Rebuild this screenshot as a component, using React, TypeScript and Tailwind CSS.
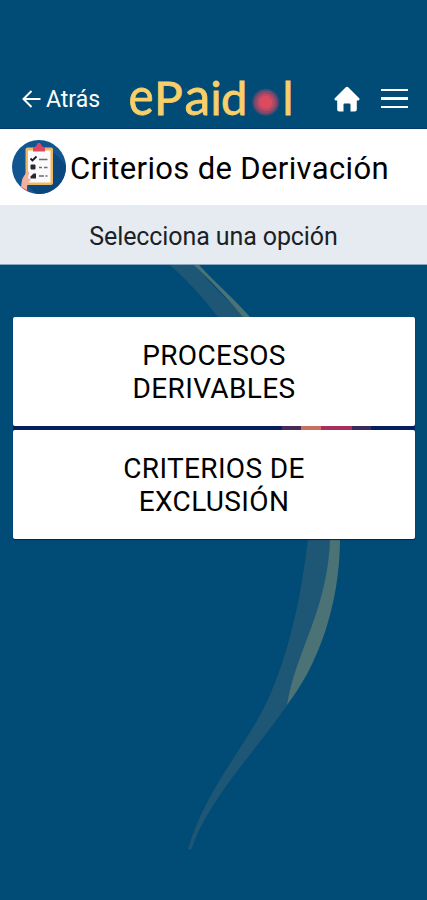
import React from "react";

const options = [
  ["PROCESOS", "DERIVABLES"],
  ["CRITERIOS DE", "EXCLUSIÓN"],
];

function Backdrop() {
  return (
    <svg
      className="pointer-events-none absolute inset-0"
      width="427"
      height="900"
      viewBox="0 0 427 900"
      fill="none"
    >
      <path
        d="M128 205C142 235 157 254 171 266C190 283 205 300 218 317L246 317C226 300 210 283 195 265C178 245 162 225 150 205Z"
        fill="#1d5775"
      />
      <path
        d="M194 265L199 265C215 282 235 300 250 317L243 317C229 300 211 281 194 265Z"
        fill="#4b7275"
      />
      <path
        d="M308 538C301 600 288 655 269 697C248 745 206 787 188 849L191 850C207 801 254 753 288 704C309 650 329 594 330 538Z"
        fill="#1d5775"
      />
      <path
        d="M330 538H340C340 608 316 668 287 705C296 650 328 610 330 538Z"
        fill="#4b7275"
      />
    </svg>
  );
}

function Logo() {
  return (
    <svg className="-mb-1 overflow-visible" width="170" height="64" viewBox="0 0 170 64">
      <g
        fill="#f8cf69"
        stroke="#f8cf69"
        strokeWidth="0.8"
        className="font-['Lato',sans-serif]"
      >
        <text transform="translate(-0.5 51) scale(.9 1)" fontSize="53">e</text>
        <text transform="translate(25 51) scale(1.02 1)" fontSize="47">P</text>
        <text transform="translate(55.5 51)" fontSize="52">a</text>
        <text transform="translate(81.500 51)" fontSize="46">i</text>
        <text transform="translate(92 51) scale(1 1)" fontSize="47">d</text>
        <text transform="translate(153.500 51)" fontSize="46">l</text>
      </g>
      <circle cx="136.700" cy="38.300" r="13.500" fill="#5c4a70" opacity=".75" />
      <circle cx="136.700" cy="38.300" r="11.500" fill="#87496a" />
      <circle cx="136.700" cy="38.300" r="9" fill="#b64963" />
      <circle cx="136.700" cy="38.300" r="6.500" fill="#dc4a5f" />
    </svg>
  );
}

function HomeIcon() {
  return (
    <svg width="26" height="26" viewBox="0 0 26 26" fill="#fff">
      <path d="M13 .8c.6 0 1 .2 1.500.7L25 12.100c1 1 .6 2.400-.9 2.400h-1.300v9c0 1.200-.8 2-2 2h-4.300v-6.700c0-.8-.5-1.300-1.300-1.300h-4.400c-.8 0-1.300.5-1.300 1.300v6.700H5.200c-1.200 0-2-.8-2-2v-9H1.900c-1.500 0-1.900-1.400-.9-2.400L11.500 1.500c.5-.5.9-.7 1.500-.7z" />
    </svg>
  );
}

function ClipboardBadge() {
  return (
    <svg className="shrink-0" width="54" height="54" viewBox="0 0 54 54">
      <defs>
        <clipPath id="badge">
          <circle cx="27" cy="27" r="27" />
        </clipPath>
      </defs>
      <g clipPath="url(#badge)">
        <rect width="54" height="54" fill="#115591" />
        <path d="M40 11L54 25V54H24L15 44Z" fill="#0b477c" />
        <rect x="13.500" y="7.500" width="27.500" height="37.500" rx="2" fill="#eeb964" />
        <rect x="16" y="10.500" width="22.500" height="32" fill="#fbfafb" />
        <path d="M21 11.500V8.500c0-1 .7-1.500 2-1.500l1-1 2-3h2l2 3 1 1c1.300 0 2 .5 2 1.500v3z" fill="#dc4863" />
        <path d="M18.500 18.500l2 2 4-4" fill="none" stroke="#171b27" strokeWidth="1.800" />
        <rect x="18.500" y="24.500" width="5" height="5" rx="1" fill="#252731" />
        <path d="M18.500 38.500v-2l3-3h2.500v5z" fill="#252731" />
        <path d="M27 19.500h8.500" stroke="#686b73" strokeWidth="1.500" />
        <path d="M27 27.500h3m2 0h3.500" stroke="#686b73" strokeWidth="1.500" />
        <path d="M27 36h5m1.500 0h2" stroke="#686b73" strokeWidth="1.500" />
        <path d="M8 54L10 40c1-3 3-6 5-8 1.500-1 3 0 2 2l-1 4 2 1c1 .7.5 2-.7 2.300l-2.300 4.700L15 54z" fill="#efb1a0" />
        <path d="M7 46l10 5-1 4H7z" fill="#d94c66" />
      </g>
    </svg>
  );
}

export default function App() {
  return (
    <div className="relative h-[900px] w-[427px] overflow-hidden bg-[#014b77] font-['Roboto',sans-serif] text-black">
      <Backdrop />
      <div className="relative flex h-full flex-col">
        <header className="flex h-[129px] items-end border-b border-[#07396a] pb-1">
          <button className="ml-[22px] flex h-12 w-[107px] items-center gap-[5px] text-[23px] text-white">
            <svg className="mb-0.5" width="19" height="18" viewBox="0 0 19 18" fill="none" stroke="#fff" strokeWidth="2">
              <path d="M18.500 9H2M9.500 1L1.500 9l8 8" />
            </svg>
            <span>Atrás</span>
          </button>
          <Logo />
          <div className="ml-[35px] flex h-12 items-center gap-[21px] pb-[3px]">
            <HomeIcon />
            <div className="flex w-[27px] flex-col gap-1.5">
              <span className="h-[2.500px] bg-white" />
              <span className="h-[2.500px] bg-white" />
              <span className="h-[2.500px] bg-white" />
            </div>
          </div>
        </header>

        <div className="flex h-[76px] items-center gap-1 bg-white pl-3">
          <ClipboardBadge />
          <h1 className="pt-1 text-[31px] tracking-[0.35px] whitespace-nowrap">
            Criterios de Derivación
          </h1>
        </div>
        <div className="flex h-[60px] items-center justify-center border-b border-[#8ba6bf] bg-[#eaeff4]/98 pt-1 text-[25px] tracking-[-0.1px] text-[#1c2125]">
          Selecciona una opción
        </div>

        <main className="mt-[52px] flex flex-col gap-1 pr-3 pl-[13px]">
          {options.map((lines, i) => (
            <React.Fragment key={lines[0]}>
              {i > 0 && (
                <div className="-my-1 flex h-1 bg-[#04205f] pl-[269px]">
                  <span className="w-[19px] bg-[#452b5b]" />
                  <span className="w-5 bg-[#c8705c]" />
                  <span className="w-[31px] bg-[#a72f5c]" />
                  <span className="w-[19px] bg-[#3b285d]" />
                </div>
              )}
              <button className="flex h-[109px] flex-col items-center justify-center rounded-[2px] bg-white text-[28px] leading-[33px] tracking-[0.35px] shadow-[0_1px_1px_#0c1870]">
                {lines.map((line) => (
                  <span key={line}>{line}</span>
                ))}
              </button>
            </React.Fragment>
          ))}
        </main>
      </div>
    </div>
  );
}
